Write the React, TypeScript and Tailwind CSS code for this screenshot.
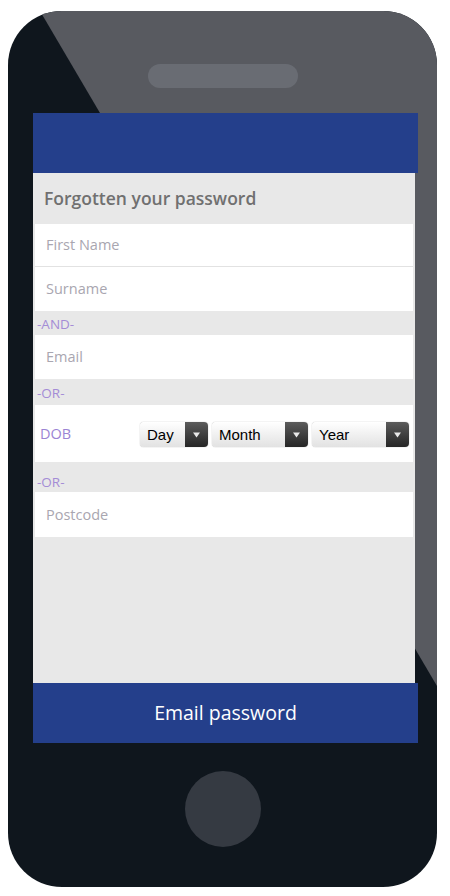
import React from "react";

const fields = ["First Name", "Surname"];

const dob = [
  { label: "Day", width: "w-[68px]" },
  { label: "Month", width: "w-[96px]" },
  { label: "Year", width: "w-[97px]" },
];

function Select({ label, width }: { label: string; width: string }) {
  return (
    <div
      className={`${width} h-[25px] flex items-stretch rounded-[4px] bg-gradient-to-b from-white to-[#e2e2e2] shadow-[0_0_1px_rgba(0,0,0,0.45)]`}
    >
      <span className="flex-1 pl-[7px] pt-[2px] flex items-center text-[15px] text-black font-['Liberation_Sans',Arial,sans-serif]">
        {label}
      </span>
      <span className="w-[23px] flex items-center justify-center rounded-r-[4px] bg-gradient-to-b from-[#5c5c5c] to-[#262626]">
        <svg width="7" height="6" viewBox="0 0 7 6">
          <path d="M0 0.5h7L3.5 5.5z" fill="#e8e8e8" />
        </svg>
      </span>
    </div>
  );
}

function Divider({ text, h, align }: { text: string; h: string; align: string }) {
  return (
    <div className={`${h} flex ${align} pl-[4px] text-[13.5px] leading-none text-[#a48cd6]`}>
      {text}
    </div>
  );
}

export default function App() {
  return (
    <div className="w-[450px] h-[896px] bg-white pt-[11px] pl-[8px] font-['Open_Sans',sans-serif]">
      <div className="relative w-[429px] h-[876px] rounded-[54px] overflow-hidden bg-[#0f161d] flex flex-col items-center">
        {/* diagonal highlight on the phone body */}
        <svg
          className="absolute inset-0"
          width="429"
          height="876"
          viewBox="0 0 429 876"
        >
          <polygon points="32,0 429,0 429,675" fill="#585a60" />
        </svg>

        <div className="relative mt-[53px] w-[150px] h-[24px] rounded-full bg-[#696c73]" />

        <div className="relative mt-[25px] self-start ml-[25px] w-[385px] flex flex-col">
          <div className="h-[60px] bg-[#243f8b]" />

          <div className="h-[510px] w-[382px] bg-[#e8e8e8] flex flex-col">
            <div className="h-[51px] flex items-center pl-[11px] text-[17.5px] font-semibold text-[#707070]">
              Forgotten your password
            </div>

            <div className="mx-[2px] bg-white">
              {fields.map((f, i) => (
                <div
                  key={f}
                  className={`${i === 0 ? "h-[43px] border-b border-[#e2e2e2]" : "h-[44px]"} flex items-center pl-[11px] text-[14.5px] text-[#a9a6b0]`}
                >
                  {f}
                </div>
              ))}
            </div>

            <Divider text="-AND-" h="h-[24px]" align="items-center pt-[3px]" />

            <div className="mx-[2px] h-[44px] bg-white flex items-center pl-[11px] text-[14.5px] text-[#a9a6b0]">
              Email
            </div>

            <Divider text="-OR-" h="h-[26px]" align="items-center pt-[3px]" />

            <div className="mx-[2px] h-[57px] bg-white flex items-center">
              <span className="pl-[5px] w-[105px] text-[14.5px] text-[#9b84d4]">
                DOB
              </span>
              <div className="flex gap-[4px] pt-[2px]">
                {dob.map((d) => (
                  <Select key={d.label} label={d.label} width={d.width} />
                ))}
              </div>
            </div>

            <Divider text="-OR-" h="h-[30px]" align="items-end pb-[3px]" />

            <div className="mx-[2px] h-[45px] bg-white flex items-center pl-[11px] text-[14.5px] text-[#a9a6b0]">
              Postcode
            </div>
          </div>

          <div className="h-[60px] bg-[#243f8b] flex items-center justify-center text-white text-[19.5px]">
            Email password
          </div>
        </div>

        <div className="relative mt-[28px] w-[76px] h-[76px] rounded-full bg-[#353a42]" />
      </div>
    </div>
  );
}
